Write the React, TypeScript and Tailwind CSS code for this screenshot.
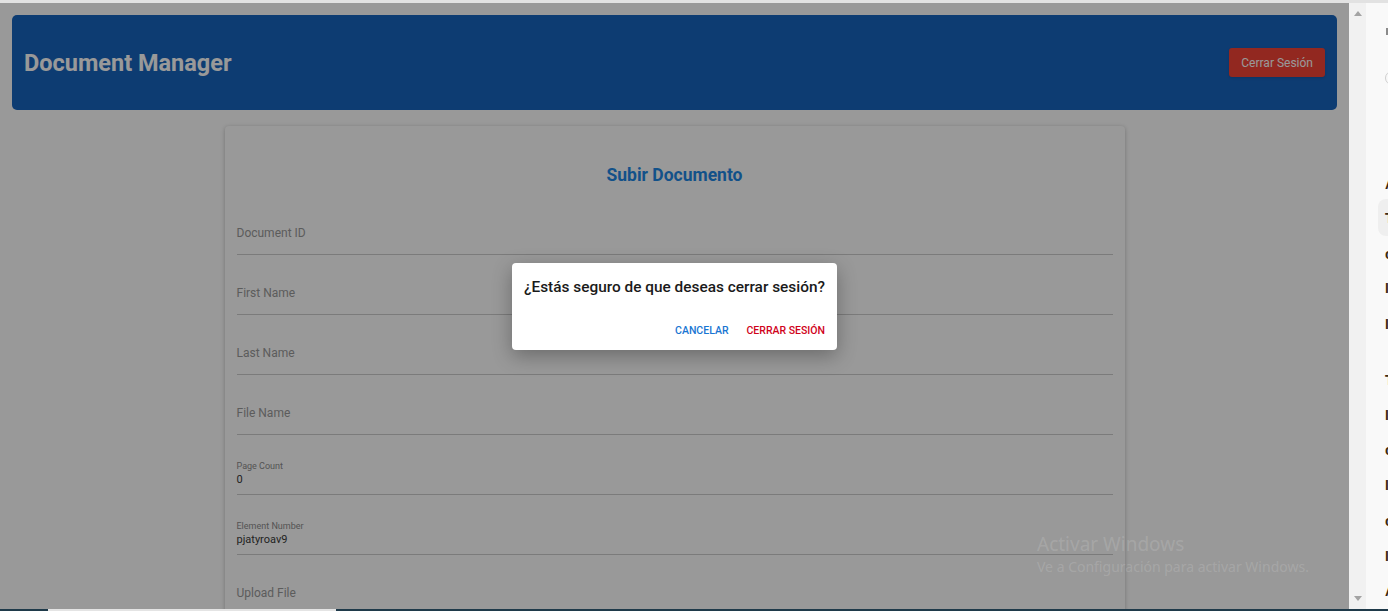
import React from 'react';

interface FieldProps {
  label: string;
  value?: string;
}

const fields: FieldProps[] = [
  { label: 'Document ID' },
  { label: 'First Name' },
  { label: 'Last Name' },
  { label: 'File Name' },
  { label: 'Page Count', value: '0' },
  { label: 'Element Number', value: 'pjatyroav9' },
  { label: 'Upload File' },
];

function Field({ label, value }: FieldProps) {
  if (value !== undefined) {
    return (
      <div className="h-[60px] shrink-0 flex flex-col justify-end">
        <div className="border-b border-[#cdcdcd] pb-[7px]">
          <div className="text-[9px] leading-[12px] mb-px text-[#8c8c8c]">{label}</div>
          <div className="text-[11px] leading-[14px] text-[#3a3a3a]">{value}</div>
        </div>
      </div>
    );
  }
  return (
    <div className="h-[60px] shrink-0 flex flex-col justify-end">
      <div className="border-b border-[#cdcdcd] pb-[13px]">
        <div className="text-[12px] leading-[16px] text-[#9a9a9a]">{label}</div>
      </div>
    </div>
  );
}

function SideStrip() {
  const glyph = 'text-[14px] leading-none font-bold text-[#3b2a14] font-["Liberation_Sans",sans-serif]';
  return (
    <div className="w-[22px] shrink-0 bg-[#f9f9f9] overflow-hidden flex flex-col">
      <div className="h-[25px]" />
      <div className="h-[8px] ml-[20px] w-[4px] bg-[#8a8a8a]" />
      <div className="h-[36px]" />
      <div className="h-[15px] w-[15px] ml-[19px] rounded-full border border-[#cfcfcf]" />
      <div className="h-[86px]" />
      <div className={`h-[30px] flex items-center pl-[19px] ${glyph}`}>Ar</div>
      <div className="h-[38px] ml-[12px] rounded-l-lg bg-[#efefef] flex items-center pl-[7px]">
        <span className={glyph}>Te</span>
      </div>
      <div className={`h-[35px] flex items-center pl-[19px] ${glyph}`}>co</div>
      <div className={`h-[36px] flex items-center pl-[19px] ${glyph}`}>In</div>
      <div className={`h-[36px] flex items-center pl-[19px] ${glyph}`}>In</div>
      <div className="h-[21px]" />
      <div className={`h-[36px] flex items-center pl-[19px] ${glyph}`}>To</div>
      <div className={`h-[36px] flex items-center pl-[19px] ${glyph}`}>In</div>
      <div className={`h-[36px] flex items-center pl-[19px] ${glyph}`}>co</div>
      <div className={`h-[36px] flex items-center pl-[19px] ${glyph}`}>In</div>
      <div className={`h-[36px] flex items-center pl-[19px] ${glyph}`}>co</div>
      <div className={`h-[36px] flex items-center pl-[19px] ${glyph}`}>In</div>
      <div className={`h-[36px] flex items-center pl-[19px] ${glyph}`}>Ar</div>
    </div>
  );
}

function Scrollbar() {
  return (
    <div className="w-[17px] shrink-0 bg-[#f1f1f1] flex flex-col items-center justify-between py-[8px]">
      <svg width="8" height="5" viewBox="0 0 8 5">
        <path d="M0 5 L4 0 L8 5 Z" fill="#a3a3a3" />
      </svg>
      <svg width="8" height="5" viewBox="0 0 8 5">
        <path d="M0 0 L8 0 L4 5 Z" fill="#a3a3a3" />
      </svg>
    </div>
  );
}

export default function App() {
  return (
    <div className="w-[1388px] h-[611px] flex flex-col overflow-hidden font-['Roboto',sans-serif]">
      <div className="h-[3px] shrink-0 bg-[#e2e2e2]" />

      <div className="flex flex-1 min-h-0">
        <main className="relative flex-1 bg-white overflow-hidden flex flex-col">
          <header className="mt-3 mx-3 h-[95px] shrink-0 rounded-[5px] bg-[#1764be] flex items-center justify-between px-3">
            <h1 className="text-[23.5px] font-bold text-white pt-[3px]">Document Manager</h1>
            <button className="h-[29px] px-3 rounded-[3px] bg-[#f44336] text-white text-[12px] shadow">
              Cerrar Sesión
            </button>
          </header>

          <section className="mt-4 mx-auto w-[900px] shrink-0 rounded-[4px] bg-white shadow-[0_1px_4px_rgba(0,0,0,0.25)] px-3 pt-[37px] flex flex-col">
            <h2 className="text-center text-[17.5px] leading-[24px] font-bold text-[#1e88e5] mb-[8px]">
              Subir Documento
            </h2>
            {fields.map((f) => (
              <Field key={f.label} label={f.label} value={f.value} />
            ))}
          </section>

          <div className="absolute inset-0 bg-black/40 flex items-center justify-center">
            <div className="w-[325px] h-[87px] rounded-[4px] bg-white shadow-[0_6px_20px_rgba(0,0,0,0.3)] pt-[14px] px-3 flex flex-col">
              <p className="text-[15.4px] leading-5 font-medium text-[#1a1a1a]">
                ¿Estás seguro de que deseas cerrar sesión?
              </p>
              <div className="mt-[22px] h-[24px] flex items-center justify-end gap-[18px] pr-0">
                <button className="text-[10.5px] font-medium uppercase text-[#1976d2]">
                  Cancelar
                </button>
                <button className="text-[10.5px] font-medium uppercase text-[#d0021b]">
                  Cerrar Sesión
                </button>
              </div>
            </div>
          </div>

          <div className="absolute left-[1037px] top-[527px] font-['Noto_Sans',sans-serif] text-white/15 pointer-events-none">
            <div className="text-[19px] leading-[28px]">Activar Windows</div>
            <div className="text-[14px] leading-[18px]">Ve a Configuración para activar Windows.</div>
          </div>
        </main>

        <Scrollbar />
        <SideStrip />
      </div>

      <div className="h-[2px] shrink-0 flex">
        <div className="w-[48px] bg-[#1f3a4a]" />
        <div className="w-[288px] bg-[#e4e4e4]" />
        <div className="flex-1 bg-[#1f3a4a]" />
      </div>
    </div>
  );
}
